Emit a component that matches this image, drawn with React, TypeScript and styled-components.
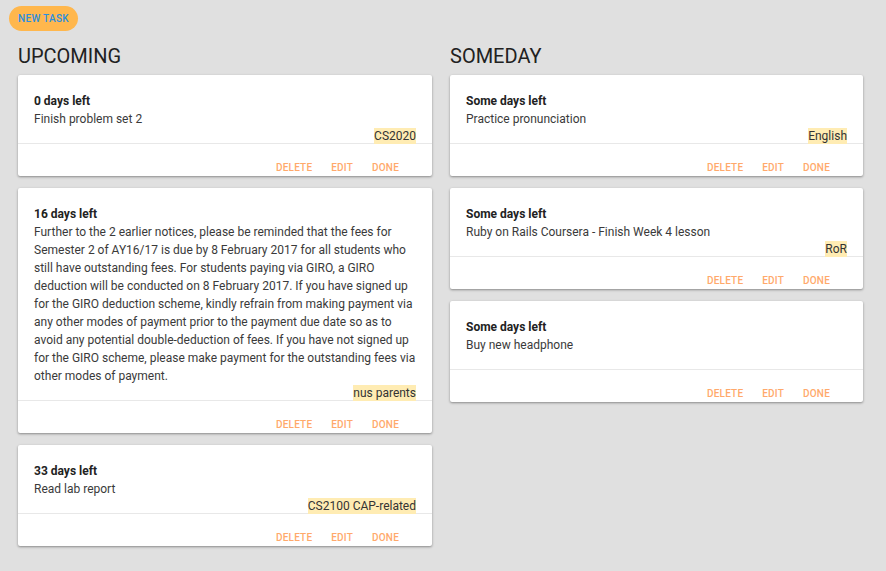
import React from "react";
import styled, { createGlobalStyle } from "styled-components";

const Global = createGlobalStyle`
  html, body { margin: 0; padding: 0; background: #e0e0e0; }
  body { font-family: Roboto, "Noto Sans", Arial, sans-serif; }
  * { box-sizing: border-box; }
`;

const Page = styled.div`
  padding: 6px 0 0 9px;
  min-height: 571px;
  background: #e0e0e0;
`;

const NewTaskButton = styled.button`
  display: block;
  height: 25px;
  width: 69px;
  border: none;
  border-radius: 13px;
  background: #ffb74d;
  color: #2a8fe0;
  font-family: Roboto, sans-serif;
  font-size: 10px;
  font-weight: 500;
  letter-spacing: 0.3px;
  padding: 0;
  text-transform: uppercase;
`;

const Columns = styled.div`
  display: grid;
  grid-template-columns: 414px 413px;
  column-gap: 18px;
  padding-left: 9px;
  margin-top: 11px;
`;

const Column = styled.section`
  display: flex;
  flex-direction: column;
`;

const Heading = styled.h2`
  margin: 0 0 5px 0;
  height: 28px;
  line-height: 28px;
  font-family: Roboto, sans-serif;
  font-size: 20px;
  font-weight: 400;
  color: #212121;
`;

const CardList = styled.div`
  display: flex;
  flex-direction: column;
  gap: 12px;
`;

const Card = styled.article`
  background: #fff;
  border-radius: 2px;
  box-shadow: 0 1px 3px rgba(0, 0, 0, 0.22), 0 1px 2px rgba(0, 0, 0, 0.2);
`;

const CardBody = styled.div`
  padding: 17px 16px 0 16px;
`;

const Title = styled.div`
  font-size: 12px;
  font-weight: 700;
  line-height: 18px;
  color: #222;
`;

const Description = styled.div`
  font-size: 12px;
  line-height: 18px;
  color: #3a3a3a;
`;

const TagRow = styled.div`
  display: flex;
  justify-content: flex-end;
  height: 15px;
`;

const Tag = styled.span`
  background: #ffecb3;
  font-size: 12px;
  line-height: 16px;
  height: 16px;
  color: #333;
`;

const Actions = styled.div`
  border-top: 1px solid #e8e8e8;
  height: 33px;
  display: flex;
  justify-content: flex-end;
  align-items: flex-end;
  gap: 19px;
  padding: 0 33px 1px 0;
`;

const ActionButton = styled.button`
  border: none;
  background: none;
  padding: 0;
  font-family: Roboto, sans-serif;
  font-size: 10px;
  line-height: 14px;
  font-weight: 500;
  letter-spacing: 0.2px;
  color: #ffa96b;
  text-transform: uppercase;
`;

type Task = { left: string; text: string; tag?: string };

const upcoming: Task[] = [
  { left: "0 days left", text: "Finish problem set 2", tag: "CS2020" },
  {
    left: "16 days left",
    text:
      "Further to the 2 earlier notices, please be reminded that the fees for Semester 2 of AY16/17 is due by 8 February 2017 for all students who still have outstanding fees. For students paying via GIRO, a GIRO deduction will be conducted on 8 February 2017. If you have signed up for the GIRO deduction scheme, kindly refrain from making payment via any other modes of payment prior to the payment due date so as to avoid any potential double-deduction of fees. If you have not signed up for the GIRO scheme, please make payment for the outstanding fees via other modes of payment.",
    tag: "nus parents",
  },
  { left: "33 days left", text: "Read lab report", tag: "CS2100 CAP-related" },
];

const someday: Task[] = [
  { left: "Some days left", text: "Practice pronunciation", tag: "English" },
  { left: "Some days left", text: "Ruby on Rails Coursera - Finish Week 4 lesson", tag: "RoR" },
  { left: "Some days left", text: "Buy new headphone" },
];

const TaskCard = ({ task }: { task: Task }) => (
  <Card>
    <CardBody>
      <Title>{task.left}</Title>
      <Description>{task.text}</Description>
      <TagRow>{task.tag && <Tag>{task.tag}</Tag>}</TagRow>
    </CardBody>
    <Actions>
      <ActionButton>Delete</ActionButton>
      <ActionButton>Edit</ActionButton>
      <ActionButton>Done</ActionButton>
    </Actions>
  </Card>
);

export default function App() {
  return (
    <>
      <Global />
      <Page>
        <NewTaskButton>New Task</NewTaskButton>
        <Columns>
          <Column>
            <Heading>UPCOMING</Heading>
            <CardList>
              {upcoming.map((t, i) => (
                <TaskCard key={i} task={t} />
              ))}
            </CardList>
          </Column>
          <Column>
            <Heading>SOMEDAY</Heading>
            <CardList>
              {someday.map((t, i) => (
                <TaskCard key={i} task={t} />
              ))}
            </CardList>
          </Column>
        </Columns>
      </Page>
    </>
  );
}
